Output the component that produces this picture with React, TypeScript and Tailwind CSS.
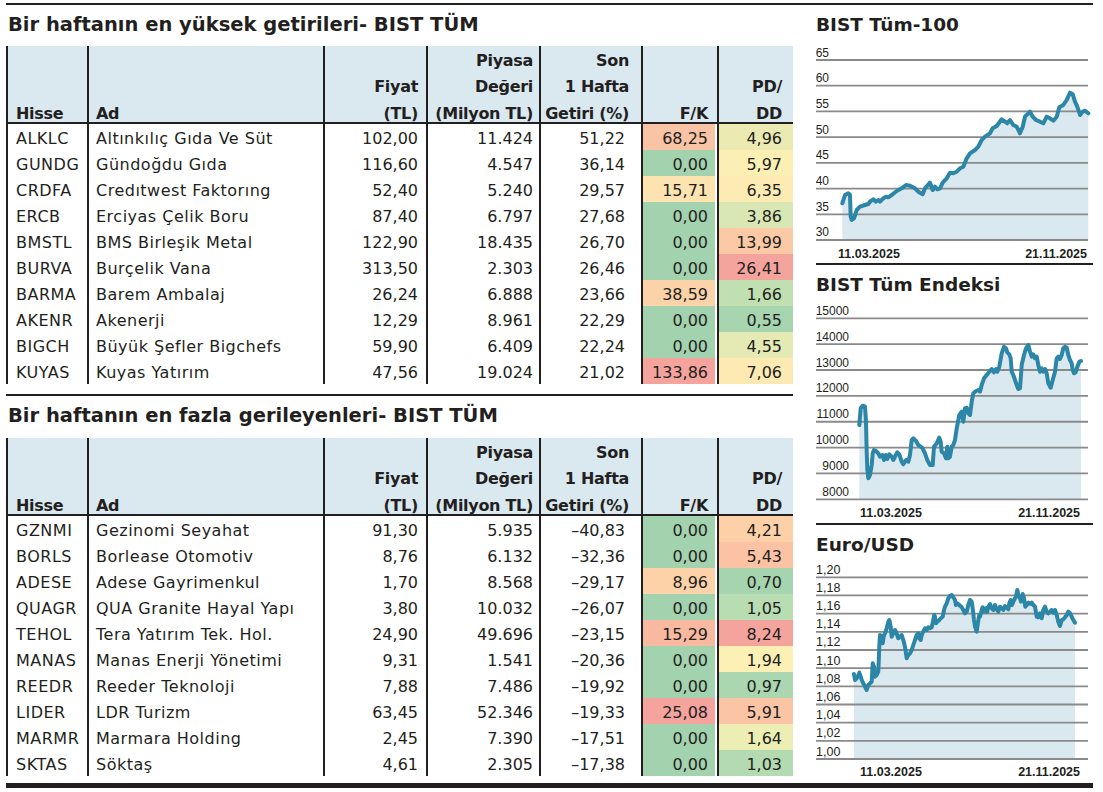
import React from "react";

type Row = [string, string, string, string, string, string, string, string, string];

const G = "bg-[#a3d3ae]";

const TOP: Row[] = [
  ["ALKLC", "Altınkılıç Gıda Ve Süt", "102,00", "11.424", "51,22", "68,25", "4,96", "bg-[#f9c3a5]", "bg-[#eaeab2]"],
  ["GUNDG", "Gündoğdu Gıda", "116,60", "4.547", "36,14", "0,00", "5,97", G, "bg-[#fcefb4]"],
  ["CRDFA", "Credıtwest Faktorıng", "52,40", "5.240", "29,57", "15,71", "6,35", "bg-[#fde3b0]", "bg-[#fdebb3]"],
  ["ERCB", "Erciyas Çelik Boru", "87,40", "6.797", "27,68", "0,00", "3,86", G, "bg-[#d8e7b3]"],
  ["BMSTL", "BMS Birleşik Metal", "122,90", "18.435", "26,70", "0,00", "13,99", G, "bg-[#fbc9a5]"],
  ["BURVA", "Burçelik Vana", "313,50", "2.303", "26,46", "0,00", "26,41", G, "bg-[#f4a49d]"],
  ["BARMA", "Barem Ambalaj", "26,24", "6.888", "23,66", "38,59", "1,66", "bg-[#fcd3a8]", "bg-[#c0e0b2]"],
  ["AKENR", "Akenerji", "12,29", "8.961", "22,29", "0,00", "0,55", G, "bg-[#a6d5af]"],
  ["BIGCH", "Büyük Şefler Bigchefs", "59,90", "6.409", "22,24", "0,00", "4,55", G, "bg-[#e5eab4]"],
  ["KUYAS", "Kuyas Yatırım", "47,56", "19.024", "21,02", "133,86", "7,06", "bg-[#f4a39d]", "bg-[#fde9b2]"],
];

const BOTTOM: Row[] = [
  ["GZNMI", "Gezinomi Seyahat", "91,30", "5.935", "–40,83", "0,00", "4,21", G, "bg-[#fdd0a8]"],
  ["BORLS", "Borlease Otomotiv", "8,76", "6.132", "–32,36", "0,00", "5,43", G, "bg-[#fbc2a4]"],
  ["ADESE", "Adese Gayrimenkul", "1,70", "8.568", "–29,17", "8,96", "0,70", "bg-[#fdd2a9]", "bg-[#a5d4ae]"],
  ["QUAGR", "QUA Granite Hayal Yapı", "3,80", "10.032", "–26,07", "0,00", "1,05", G, "bg-[#b8ddb2]"],
  ["TEHOL", "Tera Yatırım Tek. Hol.", "24,90", "49.696", "–23,15", "15,29", "8,24", "bg-[#f9b9a0]", "bg-[#f4a39d]"],
  ["MANAS", "Manas Enerji Yönetimi", "9,31", "1.541", "–20,36", "0,00", "1,94", G, "bg-[#fcf0b5]"],
  ["REEDR", "Reeder Teknoloji", "7,88", "7.486", "–19,92", "0,00", "0,97", G, "bg-[#aad6b0]"],
  ["LIDER", "LDR Turizm", "63,45", "52.346", "–19,33", "25,08", "5,91", "bg-[#f4a39d]", "bg-[#fbc4a4]"],
  ["MARMR", "Marmara Holding", "2,45", "7.390", "–17,51", "0,00", "1,64", G, "bg-[#eceeb4]"],
  ["SKTAS", "Söktaş", "4,61", "2.305", "–17,38", "0,00", "1,03", G, "bg-[#b3dab1]"],
];

function Head({ lines, cls }: { lines: string[]; cls: string }) {
  return (
    <div className={`flex h-[78px] flex-col justify-end border-b-2 border-l-2 border-[#231f20] bg-[#dae8f0] ${cls}`}>
      <div className="-mb-[5px] text-[16px] font-bold leading-[26.3px] tracking-[-0.3px]">
        {lines.map((l) => (
          <div key={l}>{l}</div>
        ))}
      </div>
    </div>
  );
}

function Section({ title, rows, titleH }: { title: string; rows: Row[]; titleH: string }) {
  const cell = "h-[26px] whitespace-nowrap border-l-2 border-[#231f20] pt-[3px] text-[16px] leading-[23px]";
  return (
    <div>
      <div className={`${titleH} pl-[2px] pt-[8px] text-[19.5px] font-bold leading-[24px]`}>{title}</div>
      <div className="grid grid-cols-[81px_236px_103px_113px_102px_76px_76px]">
        <Head lines={["Hisse"]} cls="pl-[8px]" />
        <Head lines={["Ad"]} cls="pl-[7px]" />
        <Head lines={["Fiyat", "(TL)"]} cls="pr-[8px] text-right" />
        <Head lines={["Piyasa", "Değeri", "(Milyon TL)"]} cls="pr-[6px] text-right" />
        <Head lines={["Son", "1 Hafta", "Getiri (%)"]} cls="pr-[12px] text-right" />
        <Head lines={["F/K"]} cls="pr-[9px] text-right" />
        <Head lines={["PD/", "DD"]} cls="pr-[11px] text-right" />
        {rows.map((r) => (
          <React.Fragment key={r[0]}>
            <div className={`${cell} pl-[8px] tracking-[0.5px]`}>{r[0]}</div>
            <div className={`${cell} pl-[7px] tracking-[0.5px]`}>{r[1]}</div>
            <div className={`${cell} pr-[8px] text-right`}>{r[2]}</div>
            <div className={`${cell} pr-[6px] text-right`}>{r[3]}</div>
            <div className={`${cell} pr-[16px] text-right`}>{r[4]}</div>
            <div className="h-[26px] border-l-2 border-[#231f20] pr-[2px]">
              <div className={`h-full pr-[7px] pt-[3px] text-right text-[16px] leading-[23px] ${r[7]}`}>{r[5]}</div>
            </div>
            <div className={`${cell} pr-[11px] text-right ${r[8]}`}>{r[6]}</div>
          </React.Fragment>
        ))}
      </div>
    </div>
  );
}

type ChartDef = {
  title: string;
  top: number;
  ox: number;
  oy: number;
  lines: number[];
  labels: string[];
  labelX: number;
  anchor: "start" | "end";
  labelSize: number;
  bottom: number;
  dateY: number;
  date1X: number;
  date2X: number;
  raw: number[][];
};

const range = (a: number, step: number, n: number) => Array.from({ length: n }, (_, i) => a + i * step);

const CHARTS: ChartDef[] = [
  {
    title: "BIST Tüm-100",
    top: 40,
    ox: 800,
    oy: 0,
    lines: range(60, 25.714, 8),
    labels: ["65", "60", "55", "50", "45", "40", "35", "30"],
    labelX: 829,
    anchor: "end",
    labelSize: 12,
    bottom: 240,
    dateY: 258,
    date1X: 838,
    date2X: 1087,
    raw: [[127,610],[135,585],[145,580],[150,585],[152,650],[155,660],[162,655],[170,630],[180,620],[195,615],[205,612],[210,605],[220,598],[228,605],[235,600],[240,605],[250,595],[258,590],[265,592],[275,585],[290,573],[305,565],[318,555],[330,557],[345,565],[355,575],[368,583],[375,565],[390,548],[398,570],[405,560],[412,568],[420,565],[428,548],[440,535],[450,518],[460,520],[470,515],[480,505],[490,500],[500,475],[510,460],[525,450],[535,440],[545,420],[555,410],[570,400],[578,385],[590,378],[605,358],[615,365],[622,370],[630,360],[640,375],[650,380],[660,400],[668,380],[675,350],[690,335],[698,350],[708,360],[720,365],[730,370],[740,350],[750,355],[760,362],[770,350],[778,322],[790,315],[800,300],[810,278],[818,283],[825,305],[832,320],[840,345],[848,335],[855,332],[865,340]],
  },
  {
    title: "BIST Tüm Endeksi",
    top: 300,
    ox: 800,
    oy: 265,
    lines: range(318.3, 25.857, 8),
    labels: ["15000", "14000", "13000", "12000", "11000", "10000", "9000", "8000"],
    labelX: 849,
    anchor: "end",
    labelSize: 12,
    bottom: 499.3,
    dateY: 516.7,
    date1X: 860,
    date2X: 1080,
    raw: [[178,480],[182,430],[188,422],[195,425],[198,470],[200,560],[202,610],[205,640],[210,630],[215,600],[218,565],[222,555],[228,558],[235,565],[240,575],[248,570],[252,585],[258,570],[262,582],[268,568],[275,575],[280,585],[285,575],[292,562],[298,568],[305,590],[310,598],[318,585],[325,590],[330,570],[335,525],[340,520],[348,528],[355,540],[362,545],[368,550],[375,565],[382,585],[390,600],[398,600],[402,545],[410,535],[418,518],[422,530],[425,560],[432,565],[438,580],[442,545],[445,580],[450,575],[455,545],[460,540],[465,525],[470,490],[478,450],[485,440],[490,470],[495,430],[500,428],[505,445],[510,450],[515,410],[520,385],[528,378],[535,375],[540,380],[545,360],[552,340],[560,330],[568,320],[575,312],[582,322],[588,312],[592,320],[598,305],[605,265],[612,245],[618,250],[622,262],[628,268],[632,280],[635,320],[640,330],[645,345],[650,360],[655,372],[660,370],[665,300],[672,270],[678,250],[685,240],[690,260],[695,275],[700,268],[705,280],[710,275],[715,300],[720,320],[725,310],[730,320],[735,312],[740,325],[745,355],[752,368],[758,345],[765,320],[770,280],[775,275],[780,282],[785,270],[790,250],[795,245],[800,248],[805,270],[810,285],[815,295],[818,315],[822,325],[827,322],[832,305],[838,290],[843,288]],
  },
  {
    title: "Euro/USD",
    top: 560,
    ox: 800,
    oy: 520,
    lines: range(577.3, 18.17, 11),
    labels: ["1,20", "1,18", "1,16", "1,14", "1,12", "1,10", "1,08", "1,06", "1,04", "1,02", "1,00"],
    labelX: 816,
    anchor: "start",
    labelSize: 12.5,
    bottom: 759,
    dateY: 775.7,
    date1X: 860,
    date2X: 1080,
    raw: [[162,462],[165,480],[170,475],[175,465],[178,458],[182,470],[185,480],[190,490],[195,500],[200,510],[205,495],[210,490],[215,485],[218,430],[222,440],[225,470],[230,465],[235,455],[238,380],[240,345],[245,350],[248,370],[252,345],[255,340],[260,325],[265,305],[268,300],[272,320],[275,350],[280,340],[285,330],[290,340],[295,355],[300,350],[305,345],[310,360],[315,380],[320,415],[325,405],[330,400],[335,390],[340,375],[345,360],[350,345],[355,340],[358,355],[362,360],[365,345],[370,335],[375,325],[380,330],[385,322],[390,325],[395,322],[400,300],[403,285],[405,290],[408,310],[412,305],[418,300],[422,295],[428,290],[432,270],[435,260],[440,250],[445,235],[450,228],[455,225],[460,232],[465,240],[468,255],[472,250],[478,255],[485,262],[490,270],[495,280],[500,275],[505,255],[510,240],[515,245],[518,265],[522,300],[525,320],[530,335],[535,300],[538,285],[540,290],[545,270],[548,262],[552,275],[558,265],[562,275],[565,260],[570,252],[575,265],[580,270],[585,255],[590,268],[595,275],[600,260],[605,265],[610,270],[615,258],[620,262],[625,268],[628,250],[632,240],[636,255],[640,245],[645,235],[648,230],[652,210],[655,225],[660,235],[663,245],[668,222],[672,235],[676,260],[680,255],[685,248],[690,252],[695,248],[700,255],[705,260],[710,290],[715,292],[720,280],[725,295],[730,270],[735,260],[740,275],[745,280],[750,275],[755,270],[760,278],[765,270],[770,285],[775,305],[780,318],[785,300],[790,298],[795,292],[800,285],[805,275],[810,280],[815,290],[820,300],[825,308]],
  },
];

function Chart({ c, last }: { c: ChartDef; last?: boolean }) {
  const pts = c.raw.map(([x, y]) => [c.ox + x / 3, c.oy + y / 3]);
  const line = pts.map((p, i) => `${i ? "L" : "M"}${p[0].toFixed(1)} ${p[1].toFixed(1)}`).join(" ");
  const first = pts[0];
  const end = pts[pts.length - 1];
  const area = `${line} L${end[0].toFixed(1)} ${c.bottom} L${first[0].toFixed(1)} ${c.bottom} Z`;
  const font = "'Liberation Sans', Arial, sans-serif";
  return (
    <div className={last ? "" : "border-b-2 border-[#231f20]"}>
      <div className="h-[35px] pt-[8px] text-[18.5px] font-bold leading-[24px]">{c.title}</div>
      <svg width={277} height={223} viewBox={`816 ${c.top} 277 223`} className="block">
        <path d={area} fill="#dae8f0" />
        {c.lines.map((y, i) => (
          <g key={i}>
            <line x1={816} x2={1088} y1={y} y2={y} stroke="#8a8a8a" strokeWidth={1.8} />
            <text x={c.labelX} y={y - 3.5} textAnchor={c.anchor} fontFamily={font} fontSize={c.labelSize} fill="#231f20">
              {c.labels[i]}
            </text>
          </g>
        ))}
        <path d={line} fill="none" stroke="#2b86a7" strokeWidth={4} strokeLinejoin="round" strokeLinecap="round" />
        <text x={c.date1X} y={c.dateY} fontFamily={font} fontSize={12.5} fontWeight="bold" fill="#231f20">
          11.03.2025
        </text>
        <text x={c.date2X} y={c.dateY} textAnchor="end" fontFamily={font} fontSize={12.5} fontWeight="bold" fill="#231f20">
          21.11.2025
        </text>
      </svg>
    </div>
  );
}

export default function App() {
  return (
    <div className="h-[792px] w-[1103px] bg-white font-['DejaVu_Sans',sans-serif] text-[#231f20]">
      <div className="ml-[6px] w-[1087px] pt-[3px]">
        <div className="h-[2px] bg-[#231f20]" />
        <div className="flex h-[778px] gap-[23px]">
          <div className="w-[787px]">
            <Section title="Bir haftanın en yüksek getirileri- BIST TÜM" rows={TOP} titleH="h-[41px]" />
            <div className="mt-[10px] h-[2px] bg-[#231f20]" />
            <Section title="Bir haftanın en fazla gerileyenleri- BIST TÜM" rows={BOTTOM} titleH="h-[42px]" />
          </div>
          <div className="flex w-[277px] flex-col">
            <Chart c={CHARTS[0]} />
            <Chart c={CHARTS[1]} />
            <Chart c={CHARTS[2]} last />
          </div>
        </div>
        <div className="h-[5px] bg-[#231f20]" />
      </div>
    </div>
  );
}
